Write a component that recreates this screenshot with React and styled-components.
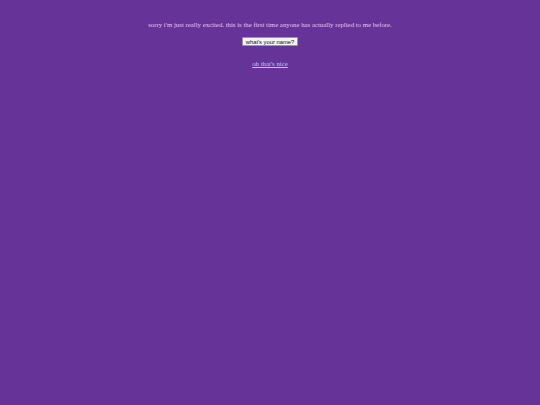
import React from "react";
import styled, { createGlobalStyle } from "styled-components";

const GlobalStyle = createGlobalStyle`
  html, body {
    margin: 0;
    padding: 0;
    background: #663399;
  }
  body {
    font-family: "Liberation Serif", "Times New Roman", serif;
  }
`;

const Page = styled.div`
  box-sizing: border-box;
  height: 405px;
  display: flex;
  flex-direction: column;
  align-items: center;
  padding-top: 21px;
`;

const Message = styled.p`
  margin: 0;
  font-size: 6.8px;
  line-height: 8px;
  color: #e2c6ea;
`;

const Button = styled.button`
  margin-top: 8px;
  height: 9px;
  font-family: "Liberation Sans", Arial, sans-serif;
  font-size: 5.8px;
  line-height: 6px;
  padding: 0 3px;
  background: #f4f4f4;
  color: #111;
  border: 1px solid #999;
  border-radius: 1px;
`;

const Link = styled.a`
  margin-top: 14px;
  font-size: 6.8px;
  line-height: 8px;
  color: #a8d0f2;
  text-decoration: underline;
  cursor: pointer;
`;

const App = () => (
  <>
    <GlobalStyle />
    <Page>
      <Message>
        sorry i'm just really excited. this is the first time anyone has actually replied to me before.
      </Message>
      <Button type="button">what's your name?</Button>
      <Link>oh that's nice</Link>
    </Page>
  </>
);

export default App;
